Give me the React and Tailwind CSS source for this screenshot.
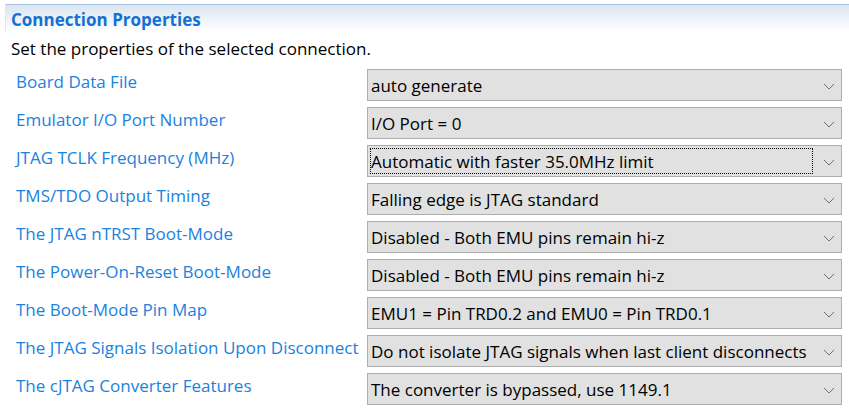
import React from "react";

const rows = [
  ["Board Data File", "auto generate"],
  ["Emulator I/O Port Number", "I/O Port = 0"],
  ["JTAG TCLK Frequency (MHz)", "Automatic with faster 35.0MHz limit", true],
  ["TMS/TDO Output Timing", "Falling edge is JTAG standard"],
  ["The JTAG nTRST Boot-Mode", "Disabled - Both EMU pins remain hi-z"],
  ["The Power-On-Reset Boot-Mode", "Disabled - Both EMU pins remain hi-z"],
  ["The Boot-Mode Pin Map", "EMU1 = Pin TRD0.2 and EMU0 = Pin TRD0.1"],
  ["The JTAG Signals Isolation Upon Disconnect", "Do not isolate JTAG signals when last client disconnects"],
  ["The cJTAG Converter Features", "The converter is bypassed, use 1149.1"],
];

function Chevron() {
  return (
    <svg width="12" height="7" viewBox="0 0 12 7" className="block">
      <polyline points="1,1 6,6 11,1" fill="none" stroke="#707070" strokeWidth="1" />
    </svg>
  );
}

export default function App() {
  return (
    <div
      className="w-[849px] h-[410px] bg-white overflow-hidden flex flex-col"
      style={{ fontFamily: '"Open Sans", "Noto Sans", sans-serif' }}
    >
      <div className="mt-[4px] ml-[5px] h-[27px] border-t border-t-[#a9c4df] border-l border-l-[#dfe6ee] bg-gradient-to-b from-[#d9e5f2] to-white flex items-start pl-[5px] pt-[4px]">
        <span className="text-[17px] leading-[22px] font-bold text-[#1470d2]">Connection Properties</span>
      </div>
      <div className="pl-[11px] mt-[7px] text-[17px] leading-[22px] text-black">
        Set the properties of the selected connection.
      </div>
      <div className="mt-[9px] flex flex-col gap-[6px] pl-[16px]">
        {rows.map(([label, value, focused], i) => (
          <div key={i} className="flex items-start h-[32px]">
            <div className="w-[351px] pt-[2px] text-[17px] leading-[22px] text-[#1a82e0] whitespace-nowrap">
              {label}
            </div>
            <div className="w-[475px] h-[32px] border border-[#adadad] bg-[#e1e1e1] relative">
              <div
                className={
                  "h-[26px] mt-[2px] ml-[2px] mr-[28px] pt-[2px] text-[17px] leading-[22px] text-black whitespace-nowrap " +
                  (focused ? "border border-dotted border-black" : "border border-transparent")
                }
              >
                {value}
              </div>
              <div className="absolute right-[6px] top-[13px]">
                <Chevron />
              </div>
            </div>
          </div>
        ))}
      </div>
    </div>
  );
}
